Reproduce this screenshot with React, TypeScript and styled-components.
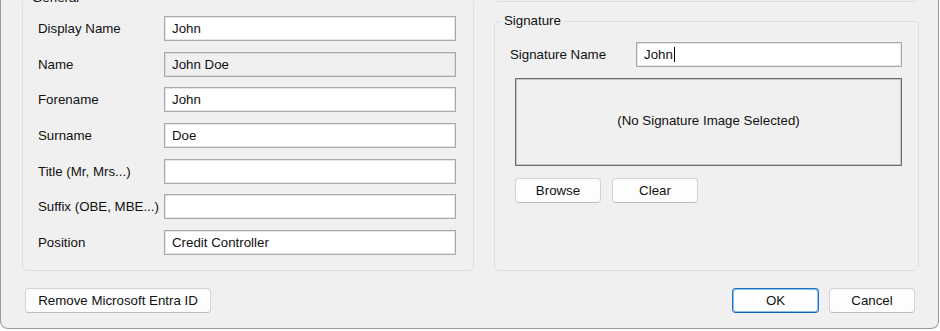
import React from 'react';
import styled, { createGlobalStyle } from 'styled-components';

const GlobalStyle = createGlobalStyle`
  html, body {
    margin: 0;
    padding: 0;
    background: #ffffff;
  }
  body {
    font-family: "Liberation Sans", Arial, sans-serif;
    font-size: 13.3px;
    color: #111111;
  }
`;

const Window = styled.div`
  box-sizing: border-box;
  width: 939px;
  height: 329px;
  background: #f0f0f0;
  border: 1px solid #9a9a9a;
  border-top: none;
  border-radius: 0 0 8px 8px;
  overflow: hidden;
  display: flex;
  flex-direction: column;
`;

const Body = styled.div`
  display: flex;
  gap: 20px;
  height: 273px;
  margin-top: -2px;
  padding: 0 19px 0 21px;
  flex-shrink: 0;
`;

const Group = styled.div<{ $width?: number }>`
  position: relative;
  box-sizing: border-box;
  border: 1px solid #dadee3;
  border-radius: 5px;
  ${(p) => (p.$width ? `width: ${p.$width}px;` : '')}
`;

const Caption = styled.span`
  position: absolute;
  top: -8px;
  left: 6px;
  padding: 0 3px;
  line-height: 14px;
  background: #f0f0f0;
`;

const GeneralGroup = styled(Group)`
  padding: 17px 0 0 15px;
`;

const FieldGrid = styled.div`
  display: grid;
  grid-template-columns: 126px 292px;
  grid-auto-rows: 25px;
  row-gap: 10.67px;
  align-items: center;
`;

const Label = styled.div`
  white-space: nowrap;
`;

const TextBox = styled.div<{ $disabled?: boolean; $width?: number }>`
  box-sizing: border-box;
  height: 25px;
  ${(p) => (p.$width ? `width: ${p.$width}px;` : '')}
  display: flex;
  align-items: center;
  padding-left: 7px;
  background: ${(p) => (p.$disabled ? '#f0f0f0' : '#ffffff')};
  border: 1px solid #a9a9a9;
  box-shadow: inset 0 0 0 1px ${(p) => (p.$disabled ? '#dcdcdc' : '#e6e6e6')};
  white-space: nowrap;
`;

const Caret = styled.span`
  display: inline-block;
  width: 1px;
  height: 15px;
  margin-left: 1px;
  background: #000;
`;

const RightColumn = styled.div`
  display: flex;
  flex-direction: column;
  width: 425px;
`;

const TopStub = styled(Group)`
  height: 22px;
  margin-top: -18px;
  margin-left: 1px;
  flex-shrink: 0;
`;

const SignatureGroup = styled(Group)`
  flex: 1;
  margin-top: 19px;
  padding: 20px 16px 0 15px;
`;

const NameRow = styled.div`
  display: flex;
  align-items: center;
`;

const NameLabel = styled(Label)`
  width: 126px;
`;

const ImageBox = styled.div`
  box-sizing: border-box;
  height: 88px;
  margin: 11px 0 0 5px;
  padding-bottom: 3px;
  display: flex;
  align-items: center;
  justify-content: center;
  border: 1px solid #6e6e6e;
  box-shadow: inset 0 0 0 1px #c4c4c4;
`;

const ButtonRow = styled.div`
  display: flex;
  gap: 11px;
  margin: 12px 0 0 5px;
`;

const Button = styled.button<{ $width: number; $primary?: boolean }>`
  box-sizing: border-box;
  width: ${(p) => p.$width}px;
  height: 25px;
  padding: 0;
  font-family: inherit;
  font-size: 13.3px;
  color: #111111;
  background: #fdfdfd;
  border: 1px solid ${(p) => (p.$primary ? '#1a74c9' : '#d2d2d2')};
  border-bottom-color: ${(p) => (p.$primary ? '#0f63b8' : '#bdbdbd')};
  border-radius: 4px;
  box-shadow: ${(p) => (p.$primary ? 'inset 0 0 0 1px #8fbde8' : 'none')};
`;

const Footer = styled.div`
  display: flex;
  align-items: center;
  padding: 17px 23px 0 24px;
`;

const Spacer = styled.div`
  flex: 1;
`;

const FooterRight = styled.div`
  display: flex;
  gap: 10px;
`;

const fields: { label: string; value: string; disabled?: boolean }[] = [
  { label: 'Display Name', value: 'John' },
  { label: 'Name', value: 'John Doe', disabled: true },
  { label: 'Forename', value: 'John' },
  { label: 'Surname', value: 'Doe' },
  { label: 'Title (Mr, Mrs...)', value: '' },
  { label: 'Suffix (OBE, MBE...)', value: '' },
  { label: 'Position', value: 'Credit Controller' },
];

export default function App() {
  return (
    <>
      <GlobalStyle />
      <Window>
        <Body>
          <GeneralGroup $width={452}>
            <Caption>General</Caption>
            <FieldGrid>
              {fields.map((f) => (
                <React.Fragment key={f.label}>
                  <Label>{f.label}</Label>
                  <TextBox $disabled={f.disabled}>{f.value}</TextBox>
                </React.Fragment>
              ))}
            </FieldGrid>
          </GeneralGroup>
          <RightColumn>
            <TopStub />
            <SignatureGroup>
              <Caption>Signature</Caption>
              <NameRow>
                <NameLabel>Signature Name</NameLabel>
                <TextBox $width={266}>
                  John
                  <Caret />
                </TextBox>
              </NameRow>
              <ImageBox>(No Signature Image Selected)</ImageBox>
              <ButtonRow>
                <Button $width={86}>Browse</Button>
                <Button $width={86}>Clear</Button>
              </ButtonRow>
            </SignatureGroup>
          </RightColumn>
        </Body>
        <Footer>
          <Button $width={186}>Remove Microsoft Entra ID</Button>
          <Spacer />
          <FooterRight>
            <Button $width={87} $primary>
              OK
            </Button>
            <Button $width={86}>Cancel</Button>
          </FooterRight>
        </Footer>
      </Window>
    </>
  );
}
